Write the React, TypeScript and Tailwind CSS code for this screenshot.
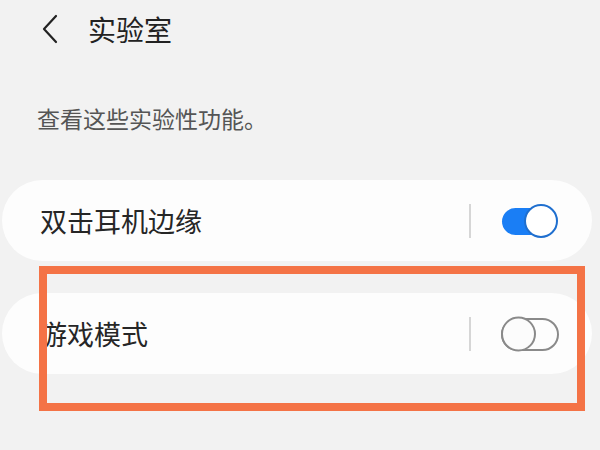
import React from "react";

const font = { fontFamily: '"Noto Sans CJK SC", "Noto Sans", sans-serif' };

function ToggleOn() {
  return (
    <svg width="58" height="36" viewBox="0 0 58 36" className="shrink-0">
      <rect x="1" y="5" width="42" height="27" rx="13.5" fill="#1a7ef5" />
      <circle cx="40" cy="18" r="16" fill="#ffffff" stroke="#1f6fcf" strokeWidth="2" />
    </svg>
  );
}

function ToggleOff() {
  return (
    <svg width="58" height="38" viewBox="0 0 58 38" className="shrink-0">
      <rect x="1" y="4" width="56" height="31" rx="15.5" fill="none" stroke="#8a8a8a" strokeWidth="2" />
      <circle cx="17.5" cy="19" r="16.5" fill="#fcfcfc" stroke="#8a8a8a" strokeWidth="2" />
    </svg>
  );
}

function Row({ label, on }: { label: string; on: boolean }) {
  return (
    <div className="ml-[2px] flex h-[81px] w-[590px] items-center rounded-full bg-[#fdfdfd] pl-[38px] pr-[33px]">
      <span className="flex-1 text-[27px] leading-none text-[#262626]">{label}</span>
      <div className="h-[34px] w-[2px] bg-[#d6d6d6]" />
      <div className="ml-[30px] flex items-center">{on ? <ToggleOn /> : <ToggleOff />}</div>
    </div>
  );
}

export default function App() {
  return (
    <div className="relative h-[450px] w-[600px] overflow-hidden bg-[#f2f2f2]" style={font}>
      <div className="flex h-[58px] items-center pl-[41px]">
        <svg width="18" height="30" viewBox="0 0 18 30">
          <path d="M15 2 L3 15 L15 28" fill="none" stroke="#222" strokeWidth="2.2" strokeLinecap="round" strokeLinejoin="round" />
        </svg>
        <span className="ml-[29px] text-[28px] leading-none text-[#222222]">实验室</span>
      </div>
      <div className="mt-[45px] pl-[37px] text-[23px] leading-[30px] text-[#555555]">查看这些实验性功能。</div>
      <div className="mt-[47px] flex flex-col gap-[32px]">
        <Row label="双击耳机边缘" on={true} />
        <Row label="游戏模式" on={false} />
      </div>
      <div className="absolute left-[39px] top-[266px] h-[145px] w-[546px] border-[8px] border-[#f47346]" />
    </div>
  );
}
